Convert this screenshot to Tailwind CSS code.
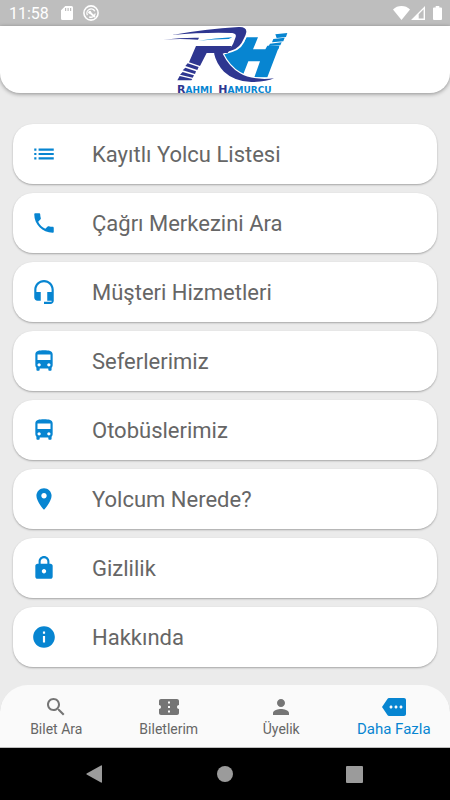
<!DOCTYPE html>
<html lang="tr">
<head>
<meta charset="utf-8">
<meta name="viewport" content="width=device-width, initial-scale=1">
<title>Rahmi Hamurcu</title>
<script src="https://cdn.jsdelivr.net/npm/@tailwindcss/browser@4"></script>
</head>
<body class="flex min-h-screen flex-col bg-[#ebebeb] font-['Roboto',sans-serif] text-[#666666]">
  <div class="flex h-[26px] shrink-0 items-center bg-[#bebebe] pr-2 pl-[9px] text-white">
    <span class="pt-px text-[16px] leading-5">11:58</span>
    <svg class="ml-3 h-[14px] w-3" viewBox="0 0 12 14" fill="currentColor" aria-hidden="true"><path fill-rule="evenodd" d="M4.300 0H10.500Q12 0 12 1.500V12.500Q12 14 10.500 14H1.500Q0 14 0 12.500V4.300ZM4 2V5H5.200V2ZM6.500 2V5H7.700V2ZM9 2V5H10.200V2Z"/></svg>
    <svg class="ml-[10px] h-4 w-4" viewBox="0 0 16 16" fill="none" stroke="currentColor" aria-hidden="true"><circle cx="8" cy="8" r="7.100" stroke-width="1.600"/><path d="M4.400 10.200A4.200 4.200 0 0 1 11.800 6.200M12.200 8.500A4.200 4.200 0 0 1 6.200 11.800" stroke-width="1.300"/><path d="M6.200 7 12 12" stroke-width="1.800"/><circle cx="6.800" cy="7.300" r="1.500" fill="currentColor" stroke="none"/></svg>
    <div class="ml-auto flex items-center">
      <svg class="h-[14px] w-[17px]" viewBox="0 0 17 14" fill="currentColor" aria-hidden="true"><path d="M8.500 14 0 3.400Q3.500 0 8.500 0T17 3.400Z"/></svg>
      <svg class="ml-px h-[14px] w-[14px]" viewBox="0 0 14 14" fill="currentColor" aria-hidden="true"><path fill-rule="evenodd" d="M0 14 14 0V14ZM7.700 8.200V12.600H12.600V3.300Z"/><path d="M9 8.500 11.500 6V11.500H9Z" fill="#bebebe"/></svg>
      <svg class="ml-2 h-[14px] w-[9px]" viewBox="0 0 9 14" fill="currentColor" aria-hidden="true"><path d="M2.700 0H6.300V1.500H8Q9 1.500 9 2.500V13Q9 14 8 14H1Q0 14 0 13V2.500Q0 1.500 1 1.500H2.700Z"/></svg>
    </div>
  </div>

  <header class="flex h-[67px] shrink-0 justify-center rounded-b-[20px] bg-white shadow-[0_1px_4px_rgba(0,0,0,0.4)]">
    <svg class="h-[70px] w-[126px] shrink-0 overflow-visible" viewBox="21 33 378 210" role="img" aria-label="Rahmi Hamurcu">
      <g fill="#0785d1">
        <path d="M130 77Q180 69 232 67L221 72Q175 73 130 77Z"/>
        <path d="M275 67H309L294 103H331L337 92H373L337 187H298L315 139H280L264 180Q236 166 213 146L217 137Q209 130 202 113Q243 108 265 84Z"/>
        <path d="M361 58 397 54 393 66 365 69ZM355 72 389 68 385 79 351 82ZM345 86 380 82 376 91 341 93ZM337 97 373 94 370 103 334 105Z"/>
      </g>
      <path d="M270 66Q262 98 231 108Q216 113 203 116Q222 155 254 174Q292 197 357 190" fill="none" stroke="#ffffff" stroke-width="7"/>
      <g fill="#2e3690">
        <path d="M51 60Q150 42 251 36Q275 35 274 51Q273 59 267 70Q255 99 231 106Q216 112 203 116Q222 155 254 174Q292 197 357 190Q334 201 289 201Q238 199 207 170Q184 147 177 115Q195 110 211 108Q228 102 235 85L242 66Q245 56 232 54Q150 51 51 60Z"/>
        <path d="M25 74Q80 67 132 68L129 74Q75 70 25 74Z"/>
        <path d="M123 93H230L218 114H155L135 153L102 142Z"/>
        <path d="M98 145 131 156 127 165 91 153ZM91 158 123 169 120 177 83 166ZM83 171 117 181 113 188 75 179ZM74 183 112 192 109 196H67Z"/>
      </g>
      <g font-family="DejaVu Sans, sans-serif" font-weight="700" font-size="27" fill="#0785d1">
        <text x="66" y="233"><tspan font-size="33" fill="#2e3690">R</tspan>AHMI</text>
        <text x="190" y="233"><tspan font-size="33" fill="#2e3690">H</tspan>AMURCU</text>
      </g>
    </svg>
  </header>

  <main class="flex-1 px-[13px] pt-[31px] pb-[18px]">
    <ul class="flex flex-col gap-[9px] text-[22px] leading-7">
      <li><a href="#" class="flex h-[60px] items-center rounded-[20px] bg-white pl-[18px] shadow-[0_1px_2px_rgba(0,0,0,0.3)]"><svg class="mr-[35px] h-[26px] w-[26px] fill-[#0785d1]" viewBox="0 0 24 24" aria-hidden="true"><path d="M3 13h2v-2H3v2zm0 4h2v-2H3v2zm0-8h2V7H3v2zm4 4h14v-2H7v2zm0 4h14v-2H7v2zM7 7v2h14V7H7z"/></svg><span class="pt-[2px]">Kayıtlı Yolcu Listesi</span></a></li>
      <li><a href="#" class="flex h-[60px] items-center rounded-[20px] bg-white pl-[18px] shadow-[0_1px_2px_rgba(0,0,0,0.3)]"><svg class="mr-[35px] h-[26px] w-[26px] fill-[#0785d1]" viewBox="0 0 24 24" aria-hidden="true"><path d="M6.620 10.790c1.440 2.830 3.760 5.140 6.590 6.590l2.200-2.200c.27-.27.67-.36 1.020-.24 1.120.37 2.330.57 3.570.57.55 0 1 .45 1 1V20c0 .55-.45 1-1 1-9.390 0-17-7.610-17-17 0-.55.45-1 1-1h3.500c.55 0 1 .45 1 1 0 1.250.2 2.450.57 3.570.11.35.03.74-.25 1.020l-2.200 2.200z"/></svg><span class="pt-[2px]">Çağrı Merkezini Ara</span></a></li>
      <li><a href="#" class="flex h-[60px] items-center rounded-[20px] bg-white pl-[18px] shadow-[0_1px_2px_rgba(0,0,0,0.3)]"><svg class="mr-[35px] h-[26px] w-[26px] fill-[#0785d1]" viewBox="0 0 24 24" aria-hidden="true"><path d="M12 1c-4.970 0-9 4.030-9 9v7c0 1.660 1.340 3 3 3h3v-8H5v-2c0-3.870 3.130-7 7-7s7 3.130 7 7v2h-4v8h4v1h-7v2h6c1.660 0 3-1.340 3-3V10c0-4.970-4.030-9-9-9z"/></svg><span class="pt-[2px]">Müşteri Hizmetleri</span></a></li>
      <li><a href="#" class="flex h-[60px] items-center rounded-[20px] bg-white pl-[18px] shadow-[0_1px_2px_rgba(0,0,0,0.3)]"><svg class="mr-[35px] h-[26px] w-[26px] fill-[#0785d1]" viewBox="0 0 24 24" aria-hidden="true"><path d="M4 16c0 .88.39 1.670 1 2.220V20c0 .55.45 1 1 1h1c.55 0 1-.45 1-1v-1h8v1c0 .55.45 1 1 1h1c.55 0 1-.45 1-1v-1.780c.61-.55 1-1.340 1-2.220V6c0-3.500-3.580-4-8-4s-8 .5-8 4v10zm3.500 1c-.83 0-1.500-.67-1.500-1.500S6.670 14 7.500 14s1.500.67 1.500 1.500S8.330 17 7.500 17zm9 0c-.83 0-1.500-.67-1.500-1.500s.67-1.500 1.500-1.500 1.500.67 1.500 1.500-.67 1.500-1.500 1.500zm1.500-6H6V6h12v5z"/></svg><span class="pt-[2px]">Seferlerimiz</span></a></li>
      <li><a href="#" class="flex h-[60px] items-center rounded-[20px] bg-white pl-[18px] shadow-[0_1px_2px_rgba(0,0,0,0.3)]"><svg class="mr-[35px] h-[26px] w-[26px] fill-[#0785d1]" viewBox="0 0 24 24" aria-hidden="true"><path d="M4 16c0 .88.39 1.670 1 2.220V20c0 .55.45 1 1 1h1c.55 0 1-.45 1-1v-1h8v1c0 .55.45 1 1 1h1c.55 0 1-.45 1-1v-1.780c.61-.55 1-1.340 1-2.220V6c0-3.500-3.580-4-8-4s-8 .5-8 4v10zm3.500 1c-.83 0-1.500-.67-1.500-1.500S6.670 14 7.500 14s1.500.67 1.500 1.500S8.330 17 7.500 17zm9 0c-.83 0-1.500-.67-1.500-1.500s.67-1.500 1.500-1.500 1.500.67 1.500 1.500-.67 1.500-1.500 1.500zm1.500-6H6V6h12v5z"/></svg><span class="pt-[2px]">Otobüslerimiz</span></a></li>
      <li><a href="#" class="flex h-[60px] items-center rounded-[20px] bg-white pl-[18px] shadow-[0_1px_2px_rgba(0,0,0,0.3)]"><svg class="mr-[35px] h-[26px] w-[26px] fill-[#0785d1]" viewBox="0 0 24 24" aria-hidden="true"><path d="M12 2C8.130 2 5 5.130 5 9c0 5.250 7 13 7 13s7-7.750 7-13c0-3.870-3.130-7-7-7zm0 9.500c-1.380 0-2.500-1.120-2.500-2.500s1.120-2.500 2.500-2.500 2.500 1.120 2.500 2.500-1.120 2.500-2.500 2.500z"/></svg><span class="pt-[2px]">Yolcum Nerede?</span></a></li>
      <li><a href="#" class="flex h-[60px] items-center rounded-[20px] bg-white pl-[18px] shadow-[0_1px_2px_rgba(0,0,0,0.3)]"><svg class="mr-[35px] h-[26px] w-[26px] fill-[#0785d1]" viewBox="0 0 24 24" aria-hidden="true"><path d="M18 8h-1V6c0-2.760-2.240-5-5-5S7 3.240 7 6v2H6c-1.100 0-2 .9-2 2v10c0 1.100.9 2 2 2h12c1.100 0 2-.9 2-2V10c0-1.100-.9-2-2-2zm-6 9c-1.100 0-2-.9-2-2s.9-2 2-2 2 .9 2 2-.9 2-2 2zm3.100-9H8.900V6c0-1.710 1.390-3.100 3.100-3.100s3.100 1.390 3.100 3.100v2z"/></svg><span class="pt-[2px]">Gizlilik</span></a></li>
      <li><a href="#" class="flex h-[60px] items-center rounded-[20px] bg-white pl-[18px] shadow-[0_1px_2px_rgba(0,0,0,0.3)]"><svg class="mr-[35px] h-[26px] w-[26px] fill-[#0785d1]" viewBox="0 0 24 24" aria-hidden="true"><path d="M12 2C6.480 2 2 6.480 2 12s4.480 10 10 10 10-4.480 10-10S17.520 2 12 2zm1 15h-2v-6h2v6zm0-8h-2V7h2v2z"/></svg><span class="pt-[2px]">Hakkında</span></a></li>
    </ul>
  </main>

  <nav class="grid h-[63px] shrink-0 grid-cols-4 rounded-t-[28px] bg-[#fafafa] text-[14px] leading-5 shadow-[inset_0_-1px_0_#bdbdbd]">
    <a href="#" class="flex flex-col items-center pt-[10px]"><svg class="h-6 w-6 fill-[#757575]" viewBox="0 0 24 24" aria-hidden="true"><path d="M15.500 14h-.79l-.28-.27C15.410 12.590 16 11.110 16 9.500 16 5.910 13.090 3 9.500 3S3 5.910 3 9.500 5.910 16 9.500 16c1.610 0 3.090-.59 4.230-1.570l.27.28v.79l5 4.990L20.490 19l-4.990-5zm-6 0C7.010 14 5 11.990 5 9.500S7.010 5 9.500 5 14 7.010 14 9.500 11.990 14 9.500 14z"/></svg>Bilet Ara</a>
    <a href="#" class="flex flex-col items-center pt-[10px]"><svg class="h-6 w-6 fill-[#757575]" viewBox="0 0 24 24" aria-hidden="true"><path d="M22 10V6c0-1.110-.9-2-2-2H4c-1.100 0-1.990.89-1.990 2v4c1.100 0 1.990.9 1.990 2s-.89 2-2 2v4c0 1.100.9 2 2 2h16c1.100 0 2-.9 2-2v-4c-1.100 0-2-.9-2-2s.9-2 2-2zm-9 7.500h-2v-2h2v2zm0-4.500h-2v-2h2v2zm0-4.500h-2v-2h2v2z"/></svg>Biletlerim</a>
    <a href="#" class="flex flex-col items-center pt-[10px]"><svg class="h-6 w-6 fill-[#757575]" viewBox="0 0 24 24" aria-hidden="true"><path d="M12 12c2.210 0 4-1.790 4-4s-1.790-4-4-4-4 1.790-4 4 1.790 4 4 4zm0 2c-2.670 0-8 1.340-8 4v2h16v-2c0-2.660-5.330-4-8-4z"/></svg>Üyelik</a>
    <a href="#" aria-current="page" class="flex flex-col items-center pt-[10px] text-[15px] text-[#0785d1]"><svg class="h-6 w-[26px] fill-[#0785d1]" viewBox="0 0 24 24" aria-hidden="true"><path d="M22 3H7c-.69 0-1.230.35-1.590.88L0 12l5.410 8.110c.36.53.97.89 1.660.89H22c1.100 0 2-.9 2-2V5c0-1.100-.9-2-2-2zM9 13.500c-.83 0-1.500-.67-1.500-1.500s.67-1.500 1.500-1.500 1.500.67 1.500 1.500-.67 1.500-1.500 1.500zm5 0c-.83 0-1.500-.67-1.500-1.500s.67-1.500 1.500-1.500 1.500.67 1.500 1.500-.67 1.500-1.500 1.500zm5 0c-.83 0-1.500-.67-1.500-1.500s.67-1.500 1.500-1.500 1.500.67 1.500 1.500-.67 1.500-1.500 1.500z"/></svg>Daha Fazla</a>
  </nav>

  <div class="flex h-[52px] shrink-0 items-center justify-center gap-[105px] bg-black">
    <button type="button" aria-label="Geri" class="flex h-6 w-6 items-center justify-start"><svg class="h-5 w-5 fill-[#9b9b9b]" viewBox="0 0 20 20" aria-hidden="true"><path d="M17 1.500Q18 1 18 2V18Q18 19 17 18.500L2.600 10.600Q2 10 2.600 9.400Z"/></svg></button>
    <button type="button" aria-label="Ana ekran" class="flex h-6 w-6 items-center justify-center"><span class="h-4 w-4 rounded-full bg-[#9b9b9b]"></span></button>
    <button type="button" aria-label="Son uygulamalar" class="flex h-6 w-6 items-center justify-center"><span class="h-[17px] w-[17px] rounded-[1px] bg-[#9b9b9b]"></span></button>
  </div>
</body>
</html>
